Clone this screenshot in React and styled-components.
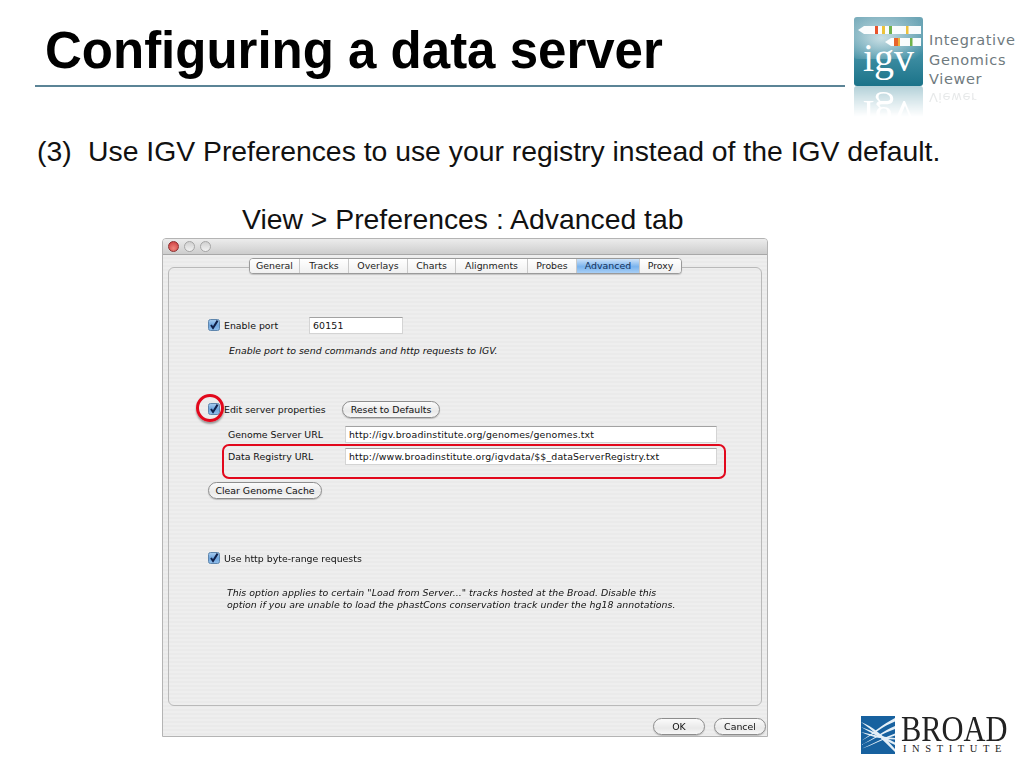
import React from "react";
import styled, { createGlobalStyle } from "styled-components";

const Global = createGlobalStyle`
  html, body { margin: 0; padding: 0; background: #fff; }
  body { font-family: "Liberation Sans", Arial, sans-serif; }
`;

const Slide = styled.div`
  width: 1024px; height: 768px; overflow: hidden; background: #fff;
  display: flex; flex-direction: column; position: relative;
`;
const Header = styled.header`
  height: 135px; display: flex; padding-left: 35px; gap: 9px; box-sizing: border-box;
`;
const TitleBlock = styled.div`
  width: 810px; height: 87px; box-sizing: border-box; padding: 23px 0 0 10px;
  border-bottom: 2px solid #5b8496;
`;
const Title = styled.h1`
  margin: 0; font-size: 51px; line-height: 55px; font-weight: 700; color: #000;
`;
const Logo = styled.div`
  display: flex; gap: 6px; padding-top: 17px; align-items: flex-start; height: 118px;
`;
const LogoWords = styled.div`
  display: flex; flex-direction: column; padding-top: 14px;
  font-family: "DejaVu Sans", sans-serif; font-size: 14.5px; line-height: 19.5px;
  color: #6f7a7e; letter-spacing: 0.65px;
`;
const LogoMirror = styled.span`
  display: block; transform: scaleY(-1); opacity: 0.16; line-height: 14px; font-size: 13px;
`;
const Bullet = styled.div`
  display: flex; padding-left: 37px; font-size: 28.35px; line-height: 32px; color: #111;
`;
const BulletMark = styled.span`width: 51px;`;
const SubHead = styled.div`
  margin-top: 36px; padding-left: 242px; font-size: 28.35px; line-height: 32px; color: #111;
`;
const Stage = styled.div`
  flex: 1; margin-top: 3px; padding-left: 162px; padding-right: 17px;
  display: flex; justify-content: space-between;
`;
const Window = styled.div`
  width: 606px; height: 499px; box-sizing: border-box; position: relative;
  display: flex; flex-direction: column;
  background: #ededed; border: 1px solid #b4b4b4; border-radius: 4px 4px 0 0;
  font-family: "DejaVu Sans", sans-serif; font-size: 9.4px; color: #111;
  filter: blur(0.35px);
`;
const TitleBar = styled.div`
  height: 15px; flex: none; display: flex; align-items: center; gap: 5px; padding-left: 5px;
  background: linear-gradient(#ececec, #cdcdcd); border-bottom: 1px solid #a8a8a8;
  border-radius: 3px 3px 0 0;
`;
const Light = styled.span`
  width: 11px; height: 11px; border-radius: 50%; box-sizing: border-box;
  border: 1px solid ${p => (p.$red ? "#8c2f2f" : "#a6a6a6")};
  background: ${p => (p.$red ? "radial-gradient(circle at 50% 70%, #f0867c, #c9363a)" : "linear-gradient(#d0d0d0, #f2f2f2)")};
`;
const Body = styled.div`
  flex: 1; display: flex; flex-direction: column; padding: 3px 5px 0 5px;
  background: repeating-linear-gradient(#eeeeee 0 2px, #eaeaea 2px 4px);
`;
const TabStrip = styled.div`
  display: flex; height: 16px; margin-left: 81px; position: relative; z-index: 1; flex: none;
  width: max-content; background: #fbfbfb; border: 1px solid #9a9a9a; border-radius: 4px;
  box-sizing: border-box; overflow: hidden; box-shadow: 0 1px 1px #c4c4c4;
`;
const Tab = styled.div`
  width: ${p => p.$w}px; box-sizing: border-box; text-align: center; line-height: 14px;
  border-right: ${p => (p.$last ? "none" : "1px solid #c9c9c9")};
  background: ${p => (p.$on ? "linear-gradient(#cfe3f8, #79b3ee 55%, #a8cff5)" : "linear-gradient(#ffffff, #f0f0f0)")};
  color: ${p => (p.$on ? "#12305a" : "#222")};
`;
const Panel = styled.div`
  height: 439px; margin-top: -7px; flex: none; box-sizing: border-box;
  border: 1px solid #b9b9b9; border-radius: 6px; padding-left: 39px;
  display: flex; flex-direction: column;
`;
const Row = styled.div`
  display: flex; align-items: center; height: 18px; flex: none;
  margin-top: ${p => p.$top}px; padding-left: ${p => p.$left || 0}px;
`;
const CheckLabel = styled.span`margin-left: 4px; width: ${p => p.$w}px; white-space: nowrap;`;
const FieldLabel = styled.span`width: 117px; white-space: nowrap;`;
const Field = styled.div`
  width: ${p => p.$w}px; height: 17px; box-sizing: border-box; background: #fff;
  border: 1px solid #d4d4d4; border-top: 1px solid #a2a2a2; padding-left: 3px; line-height: 15px;
  white-space: nowrap; letter-spacing: 0.15px;
`;
const Pill = styled.div`
  width: ${p => p.$w}px; height: 17px; box-sizing: border-box; border-radius: 9px; flex: none;
  border: 1px solid #8d8d8d; background: linear-gradient(#fbfbfb, #e9e9e9 60%, #f7f7f7);
  text-align: center; line-height: 15px; color: #111; white-space: nowrap;
  box-shadow: 0 1px 1px #bdbdbd;
`;
const Help = styled.p`
  margin: ${p => p.$top}px 0 0 ${p => p.$left}px; font-style: italic; line-height: 12px; white-space: nowrap;
  letter-spacing: 0.03px;
`;
const Footer = styled.div`
  flex: 1; display: flex; justify-content: flex-end; align-items: flex-start; gap: 9px;
  padding-top: 12px; margin-right: -4px;
`;
const Circle = styled.div`
  position: absolute; left: 33px; top: 155px; width: 28px; height: 28px; box-sizing: border-box;
  border: 3px solid #e2081c; border-radius: 50%;
  box-shadow: 0 2px 2px rgba(0,0,0,0.35);
`;
const Highlight = styled.div`
  position: absolute; left: 59px; top: 205px; width: 504px; height: 35px; box-sizing: border-box;
  border: 2px solid #e2081c; border-radius: 7px;
`;
const Broad = styled.div`
  align-self: flex-end; margin-bottom: 14px; display: flex; gap: 6px; align-items: flex-start;
`;
const BroadWords = styled.div`
  display: flex; flex-direction: column; width: 106px; font-family: "Liberation Serif", serif; color: #222;
`;
const BroadName = styled.span`
  display: block; font-size: 35px; line-height: 28px; height: 28px; white-space: nowrap;
  transform: scaleX(0.87); transform-origin: left center;
`;
const BroadSub = styled.span`
  font-size: 10.5px; line-height: 10px; height: 10px; letter-spacing: 5.6px; padding-left: 2px; white-space: nowrap;
`;

const Check = () => (
  <svg width="12" height="12" viewBox="0 0 12 12" style={{ flex: "none" }}>
    <defs>
      <linearGradient id="cb" x1="0" y1="0" x2="0" y2="1">
        <stop offset="0" stopColor="#a9cdf0" /><stop offset="0.5" stopColor="#6fa6de" /><stop offset="1" stopColor="#8fbdeb" />
      </linearGradient>
    </defs>
    <rect x="0.5" y="0.5" width="11" height="11" rx="2" fill="url(#cb)" stroke="#5f86ad" />
    <path d="M3 6 L5 9 L9.6 1.6" fill="none" stroke="#10204a" strokeWidth="2" />
  </svg>
);

const IgvArt = () => (
  <>
    <rect width="69" height="69" rx="3" fill="url(#igvBg)" />
    <rect width="69" height="42" rx="3" fill="url(#igvGlow)" />
    <path d="M10 9 H67 V17 H10 L4 13 Z" fill="#fff" opacity="0.95" />
    <rect x="21" y="9" width="3" height="8" fill="#e8532b" />
    <rect x="28" y="9" width="3" height="8" fill="#ecc33a" />
    <rect x="35" y="9" width="3" height="8" fill="#6fb24a" />
    <rect x="52" y="9" width="2.5" height="8" fill="#edc13c" />
    <path d="M37 21 H67 V29 H37 L31 25 Z" fill="#fff" opacity="0.95" />
    <rect x="40" y="21" width="4" height="8" fill="#e8632b" />
    <rect x="44" y="21" width="2" height="8" fill="#efb23a" />
    <rect x="56" y="21" width="2.5" height="8" fill="#6fb24a" />
    <text x="34.5" y="54" textAnchor="middle" fontFamily="Liberation Serif, serif" fontSize="40" fill="#fff">igv</text>
  </>
);

const IgvMark = () => (
  <svg width="69" height="122" viewBox="0 0 69 122" style={{ flex: "none" }}>
    <defs>
      <linearGradient id="igvBg" x1="0" y1="0" x2="0" y2="1">
        <stop offset="0" stopColor="#6fa6b6" /><stop offset="0.55" stopColor="#3f8ea3" /><stop offset="1" stopColor="#1b7389" />
      </linearGradient>
      <radialGradient id="igvGlow" cx="0.4" cy="0.5" r="0.7">
        <stop offset="0" stopColor="#dfecef" stopOpacity="0.85" /><stop offset="1" stopColor="#dfecef" stopOpacity="0" />
      </radialGradient>
      <linearGradient id="fade" x1="0" y1="69" x2="0" y2="100" gradientUnits="userSpaceOnUse">
        <stop offset="0" stopColor="#fff" stopOpacity="0.34" /><stop offset="1" stopColor="#fff" stopOpacity="0" />
      </linearGradient>
      <mask id="fadeMask" maskUnits="userSpaceOnUse" x="0" y="69" width="69" height="53"><rect y="69" width="69" height="53" fill="url(#fade)" /></mask>
    </defs>
    <IgvArt />
    <g mask="url(#fadeMask)">
      <g transform="translate(0 138) scale(1 -1)"><IgvArt /></g>
    </g>
  </svg>
);

const BroadMark = () => (
  <svg width="34" height="38" viewBox="0 0 34 38" style={{ flex: "none" }}>
    <rect width="34" height="38" fill="#17619f" />
    <g fill="#e4eff7">
      <path d="M0 25 C12 17 22 8 34 2 V5.5 C22 10 12 19 0 25 Z" />
      <path d="M0 29 C12 23 22 15 34 10 V13 C22 17 12 24 0 29 Z" />
      <path d="M0 33 C12 28 22 22 34 17.5 V19.5 C22 23 12 29 0 33 Z" />
      <path d="M0 6 C12 11 22 19 34 33 V36 C22 24 12 14 0 6 Z" />
      <path d="M0 11 C12 15 22 20 34 26.5 V29 C22 23.5 12 18 0 11 Z" />
      <path d="M0 16 C12 19 22 21 34 22 V23.5 C22 23 12 21.5 0 16 Z" />
    </g>
  </svg>
);

const tabs = [
  ["General", 50], ["Tracks", 49], ["Overlays", 59], ["Charts", 48],
  ["Alignments", 72], ["Probes", 49], ["Advanced", 63], ["Proxy", 41],
];

export default function App() {
  return (
    <Slide>
      <Global />
      <Header>
        <TitleBlock><Title>Configuring a data server</Title></TitleBlock>
        <Logo>
          <IgvMark />
          <LogoWords>
            <span>Integrative</span>
            <span>Genomics</span>
            <span>Viewer</span>
            <LogoMirror aria-hidden="true">Viewer</LogoMirror>
          </LogoWords>
        </Logo>
      </Header>
      <Bullet>
        <BulletMark>(3)</BulletMark>
        <span>Use IGV Preferences to use your registry instead of the IGV default.</span>
      </Bullet>
      <SubHead>View &gt; Preferences : Advanced tab</SubHead>
      <Stage>
        <Window>
          <TitleBar><Light $red /><Light /><Light /></TitleBar>
          <Body>
            <TabStrip>
              {tabs.map(([t, w], i) => (
                <Tab key={t} $w={w} $on={t === "Advanced"} $last={i === tabs.length - 1}>{t}</Tab>
              ))}
            </TabStrip>
            <Panel>
              <Row $top={48}>
                <Check /><CheckLabel $w={85}>Enable port</CheckLabel>
                <Field $w={94}>60151</Field>
              </Row>
              <Help $top={11} $left={21}>Enable port to send commands and http requests to IGV.</Help>
              <Row $top={43}>
                <Check /><CheckLabel $w={118}>Edit server properties</CheckLabel>
                <Pill $w={98}>Reset to Defaults</Pill>
              </Row>
              <Row $top={7} $left={20}>
                <FieldLabel>Genome Server URL</FieldLabel>
                <Field $w={372}>http://igv.broadinstitute.org/genomes/genomes.txt</Field>
              </Row>
              <Row $top={4} $left={20}>
                <FieldLabel>Data Registry URL</FieldLabel>
                <Field $w={372}>http://www.broadinstitute.org/igvdata/$$_dataServerRegistry.txt</Field>
              </Row>
              <Row $top={16}><Pill $w={114}>Clear Genome Cache</Pill></Row>
              <Row $top={50}>
                <Check /><CheckLabel $w={200}>Use http byte-range requests</CheckLabel>
              </Row>
              <Help $top={20} $left={19}>
                This option applies to certain "Load from Server..." tracks hosted at the Broad. Disable this<br />
                option if you are unable to load the phastCons conservation track under the hg18 annotations.
              </Help>
            </Panel>
            <Footer>
              <Pill $w={52}>OK</Pill>
              <Pill $w={52}>Cancel</Pill>
            </Footer>
          </Body>
          <Circle />
          <Highlight />
        </Window>
        <Broad>
          <BroadMark />
          <BroadWords>
            <BroadName>BROAD</BroadName>
            <BroadSub>INSTITUTE</BroadSub>
          </BroadWords>
        </Broad>
      </Stage>
    </Slide>
  );
}
